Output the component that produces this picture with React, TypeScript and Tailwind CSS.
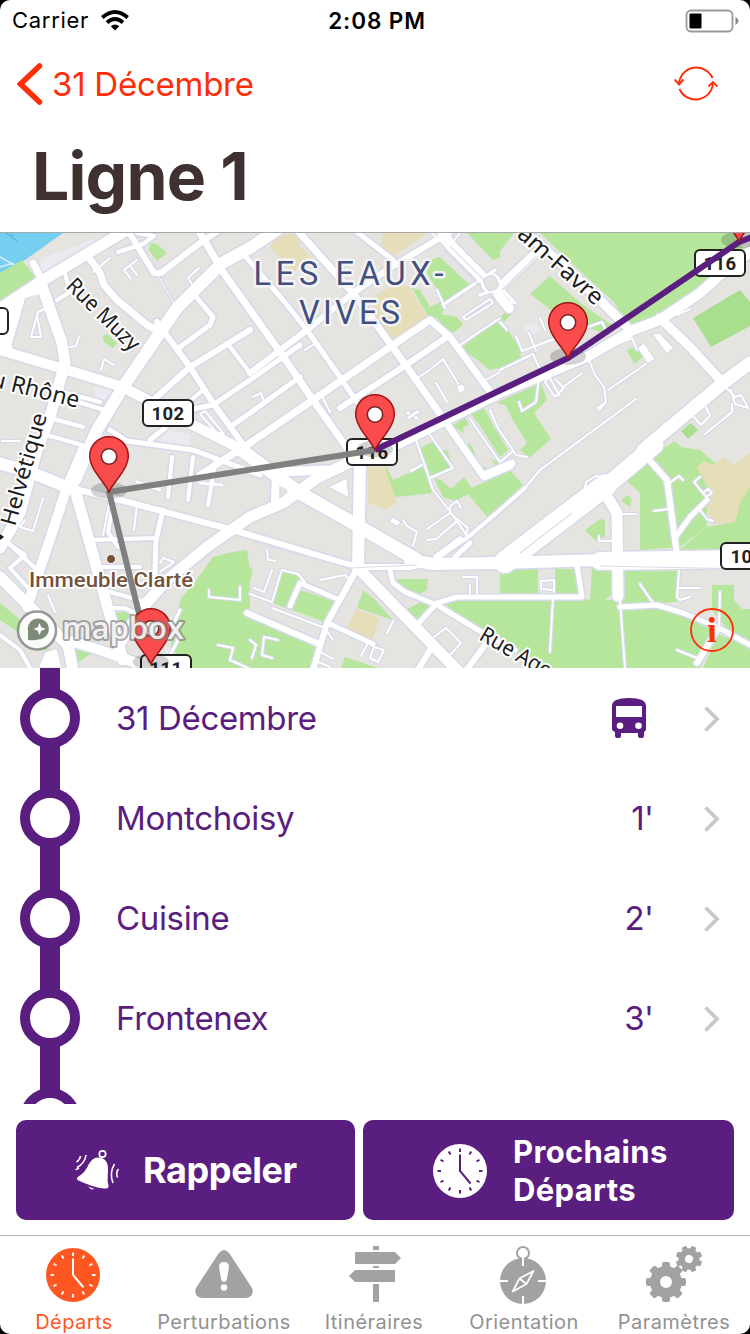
import React from "react";

type Road = [width: number, points: string];

const parks = [
  "0,273 22,260 35,277 0,302",
  "150,243 157,244 167,253 157,261 149,250",
  "103,336 107,334 117,343 113,348 104,342",
  "423,267 430,260 440,257 472,287 447,305",
  "412,288 420,290 430,307 442,301 445,308 441,314 457,317 463,325 450,335 437,318 428,316",
  "467,233 500,233 500,257 493,260",
  "461,348 500,318 521,350 520,363 490,370 480,362",
  "500,233 514,233 500,251",
  "540,233 735,233 744,250 715,273 700,293 675,307 655,318 628,326 614,302 570,262",
  "744,250 750,246 750,252 740,258",
  "530,294 550,276 577,300 590,310 612,325 603,333 560,317",
  "500,318 508,309 512,313 504,322",
  "627,350 637,346 643,357 634,364",
  "386,466 393,480 423,467 433,493 397,497 386,496",
  "420,448 434,441 453,466 431,477",
  "423,450 447,450 453,467 433,477",
  "434,478 441,480 451,489 464,477 472,488 491,479 510,470 523,485 488,518 468,494 455,501 443,497",
  "451,426 465,418 469,425 463,427 464,434 458,429 454,434",
  "470,413 484,408 493,425 508,450 500,457 493,446 481,427",
  "496,403 541,383 547,400 534,413 551,439 529,458 520,450 527,443 514,422 505,405",
  "466,447 470,443 476,455 469,456",
  "481,469 485,466 487,472 496,466 491,459 498,462 496,469 484,474",
  "660,450 675,441 681,447 700,450 727,473 724,484 707,498 707,526 680,547 640,550 640,493 626,480 648,460",
  "585,530 600,519 605,520 605,537 595,540",
  "621,501 627,495 632,499 630,507",
  "740,502 750,485 750,555 677,552 706,527 735,522",
  "213,557 232,552 247,550 250,570 250,668 180,668 170,650 176,620 181,598 192,586",
  "0,603 17,617 35,637 50,650 40,650 15,630 0,620",
  "73,640 97,650 77,663",
  "110,615 125,611 138,616 133,625 122,621",
  "283,572 303,577 300,590 337,602 327,623 273,603",
  "250,568 253,569 250,582",
  "247,615 285,633 317,645 310,670 245,670",
  "345,657 378,668 341,668",
  "363,590 375,600 393,620 357,608",
  "397,579 428,579 427,590 413,598 402,590",
  "403,611 423,601 437,605 418,622",
  "442,602 457,597 617,600 628,668 545,668 500,642 484,633",
  "500,569 538,569 538,595 500,595",
  "555,569 575,569 580,596 555,595",
  "592,568 614,568 614,593 604,600 590,600",
  "624,571 678,571 677,602 657,603 622,603",
  "622,608 656,608 690,618 718,633 700,668 627,668",
  "712,585 734,585 734,600 742,609 750,609 750,640 728,630 712,610",
  "718,634 750,648 750,668 703,668",
];

const lawns = ["693,318 740,290 750,302 750,326 711,347", "681,431 691,423 698,430 688,439"];

const schools = [
  "276,236 300,233 300,247 312,258 302,261 294,272 284,263 270,247",
  "383,233 427,233 393,257 380,247",
  "373,297 395,284 410,287 427,317 390,342 374,312",
  "368,467 385,467 397,502 385,509 368,503",
  "356,609 380,618 372,640 346,630",
  "697,467 704,461 713,465 724,457 733,465 750,453 750,487 740,503 735,522 713,524 703,500 708,488",
];

const pale = [
  "38,266 45,257 110,233 125,233 45,275",
  "95,385 115,388 105,400 95,398",
  "168,430 190,434 190,448 157,445",
  "523,327 536,322 540,331 528,336",
  "165,645 175,652 180,665 166,660",
];

const roads: Road[] = [
  [4, "137,233 154,236 143,244 118,252"],
  [2, "110,258 93,272"],
  [2, "137,260 124,270 131,279 M130,266 137,275"],
  [2, "199,268 188,278 193,286"],
  [1, "158,275 174,304"],
  [2, "47,308 38,312 31,337 41,337 37,315"],
  [2, "79,337 76,346 70,347"],
  [2, "101,370 104,359 114,365"],
  [2, "200,414 205,411 224,434 217,433 200,414"],
  [2, "2,441 20,441"],
  [4, "57,300 70,292 64,270"],
  [4, "47,417 83,427 M47,435 82,445 M66,393 100,402 M72,400 104,410"],
  [2, "305,350 316,343"],
  [2, "253,397 261,393 264,401"],
  [2, "323,398 330,412"],
  [2, "417,378 427,372 443,359 459,385"],
  [2, "436,383 447,402"],
  [3, "408,413 417,418"],
  [3, "443,305 495,270"],
  [2, "463,317 490,299 493,303 466,320 463,317"],
  [2, "457,347 500,318"],
  [2, "482,382 500,372"],
  [2, "500,370 533,354 540,370 536,402 522,411 519,402"],
  [2, "516,336 522,351 552,340 M529,333 536,351 M540,318 545,330"],
  [2, "500,322 507,330 M500,297 514,303"],
  [2, "559,395 549,376 545,382 555,397 564,388 555,379 M562,388 582,373"],
  [2, "540,344 602,322 607,333"],
  [2, "589,360 595,375 604,387 606,402 597,408 M606,402 599,410"],
  [2, "590,355 632,338 637,350"],
  [2, "608,390 646,364"],
  [2, "567,450 636,399"],
  [2, "677,315 690,309"],
  [2, "722,383 735,397 741,395 748,408 735,404 731,390"],
  [2, "705,434 732,412 732,404"],
  [2, "693,416 701,425 710,416 706,407"],
  [2, "415,437 425,466 433,490 449,510 468,537"],
  [2, "428,432 453,468 430,478 M422,465 411,471"],
  [2, "490,410 498,428 516,455 527,457 M470,419 500,462 512,452"],
  [2, "427,529 450,513 450,506 457,501 461,508 M450,513 468,528 466,535 M427,540 436,539 456,522"],
  [2, "403,520 407,526 417,532 413,546"],
  [2, "267,550 268,560 276,561"],
  [2, "320,580 345,575 350,580"],
  [2, "282,570 298,574 305,582"],
  [2, "272,570 264,592 254,588 M281,572 272,602 250,594"],
  [5, "290,606 300,583 335,598"],
  [2, "272,608 325,628 333,640"],
  [2, "387,633 393,621"],
  [2, "430,640 446,628 461,643 448,657"],
  [2, "374,647 384,650 378,662 370,658 374,647 M367,645 361,656"],
  [2, "278,640 264,637 262,655 272,658 M250,640 256,645 252,658"],
  [2, "319,651 333,659 M316,661 330,667"],
  [2, "584,494 586,482 596,476 606,478"],
  [2, "606,492 625,478"],
  [2, "620,514 636,514"],
  [2, "599,536 599,541 613,541"],
  [2, "654,511 668,509"],
  [2, "668,484 679,476 683,480"],
  [2, "700,477 694,482 706,497 712,493 708,489 704,492"],
  [2, "700,510 707,519 713,521"],
  [2, "553,597 550,652"],
  [2, "554,590 541,589 541,581 554,580 554,592"],
  [2, "620,600 625,668"],
  [2, "653,603 640,584"],
  [2, "679,571 677,597 680,600 690,597 M678,588 700,588"],
  [2, "720,592 719,628"],
  [2, "677,650 697,658"],
  [2, "463,577 477,577 477,593 M470,585 470,593"],
  [2, "110,500 103,535 M137,505 134,530"],
  [2, "43,498 33,531 20,527 25,520"],
  [2, "240,587 240,600 209,597 209,590"],
  [2, "218,645 233,648 230,660 248,668"],
  [2, "48,595 55,612"],
  [4, "10,545 25,555 10,568 30,590 M0,535 37,570"],
  [4, "172,457 168,497"],
  [4, "193,457 188,500"],
  [4, "216,458 208,505"],
  [3, "137,482 160,490 M200,483 222,485"],
  [5, "163,510 156,540 155,573"],
  [4, "90,540 156,538"],
  [4, "113,505 108,532 118,547"],
  [2, "160,563 163,558 174,562 160,572"],
  [4, "103,567 140,567 M110,592 150,603"],
  [4, "105,608 125,608 145,618"],
  [3, "180,610 173,625 178,640 170,655"],
  [6, "127,229 154,273 161,273 200,243 222,228"],
  [7, "87,255 100,273 104,285 117,300 147,325 157,330"],
  [7, "197,228 223,272 250,310 280,352 313,400 352,455"],
  [6, "157,322 165,333 190,367 213,403 247,450"],
  [5, "180,347 210,325 213,317 197,298"],
  [6, "150,403 190,367 250,330"],
  [4, "227,343 250,373"],
  [4, "185,405 203,390"],
  [5, "193,409 213,405 250,380 300,345"],
  [5, "230,427 250,413 300,377"],
  [5, "150,440 165,428"],
  [6, "250,373 307,330 353,293 393,266 450,232"],
  [5, "357,232 393,260"],
  [7, "290,222 353,293 373,320 407,367 440,414 484,477 510,466"],
  [5, "240,250 283,300 307,330 342,380 357,402"],
  [7, "200,475 250,443 313,400 342,380 390,347 430,320 450,337 483,382 495,398"],
  [6, "340,408 403,367 447,337"],
  [11, "440,228 450,245 483,278"],
  [10, "498,294 509,308"],
  [2, "432,233 446,246 M460,233 452,243"],
  [2, "437,290 445,308"],
  [7, "484,475 512,463"],
  [9, "500,287 537,252"],
  [3, "480,295 500,287 515,303"],
  [9, "515,225 540,245 597,297 627,327"],
  [9, "660,318 690,347 723,383"],
  [7, "460,540 437,557"],
  [4, "437,557 467,538 500,510 525,488"],
  [2, "525,488 540,470 567,450"],
  [5, "455,557 470,543"],
  [4, "0,635 20,650 30,668"],
  [11, "0,577 30,607 55,632 68,645 73,670"],
  [10, "60,638 100,650 150,668"],
  [11, "42,286 62,343 65,363 50,417 37,450 20,513 0,548"],
  [10, "83,450 67,487 48,545 27,607"],
  [11, "75,490 87,533 107,605 123,660"],
  [10, "0,350 67,370 123,387 147,400 193,425 247,452"],
  [11, "-5,312 40,282 90,252 140,222"],
  [12, "300,214 250,248 222,263 177,308 157,337 123,387 97,430 75,480"],
  [5, "110,430 127,441 193,450 260,475"],
  [7, "33,263 42,280"],
  [12, "-5,462 30,472 67,487"],
  [6, "67,487 120,500 233,530 250,535 357,567 410,567 425,563"],
  [11, "120,643 143,607 167,580 207,547 250,517 283,503 317,478 365,455"],
  [9, "276,472 327,470"],
  [8, "276,473 275,500"],
  [13, "240,449 300,493 360,527 417,560"],
  [12, "360,463 358,568"],
  [6, "358,567 327,623 313,670"],
  [11, "358,568 462,675"],
  [5, "390,570 393,583 405,592 437,605 483,633 515,650"],
  [5, "417,625 437,603 457,597 582,597 577,565"],
  [6, "247,613 317,643"],
  [5, "328,623 373,644"],
  [6, "430,650 415,675 M485,645 465,672"],
  [10, "360,463 500,393 587,357 633,330 660,320 700,293 720,275 750,252"],
  [13, "750,363 723,383 643,450"],
  [17, "655,445 615,479 600,491"],
  [22, "606,485 560,520 505,562"],
  [11, "603,490 617,513 618,596"],
  [6, "645,455 667,480 677,555"],
  [5, "677,535 690,517 707,500"],
  [12, "410,560 433,564 500,563 600,560"],
  [18, "600,561 750,559"],
  [5, "620,607 657,605 683,613 717,627 752,646"],
  [6, "717,630 697,663"],
];

function Lines({ casing }: { casing: boolean }) {
  return (
    <g fill="none" strokeLinecap="round" strokeLinejoin="round" stroke={casing ? "#d5d9e9" : "#ffffff"}>
      {roads.map(([w, p], i) => (
        <path key={i} d={`M${p}`} strokeWidth={casing ? w + (w < 4 ? 2.2 : 3) : w} />
      ))}
    </g>
  );
}

function PinShadow({ x, y }: { x: number; y: number }) {
  return <ellipse cx={x} cy={y} rx="18" ry="8.500" fill="#000" fillOpacity=".17" />;
}

function PinHead({ x, y }: { x: number; y: number }) {
  return (
    <g transform={`translate(${x} ${y})`}>
      <path
        d="M0 0.500C-3-8-19.300-22-19.300-35.500A19.300 19.300 0 0 1 19.300-35.500C19.300-22 3-8 0 0.500Z"
        fill="#fb4c4d"
        stroke="#a01516"
        strokeWidth="1.500"
      />
      <circle cx="0" cy="-35" r="7.700" fill="#fff" stroke="#7c2526" strokeWidth="1.600" />
    </g>
  );
}

function Shield({ x, y, w, label }: { x: number; y: number; w: number; label: string }) {
  return (
    <g>
      <rect x={x} y={y} width={w} height="26" rx="5" fill="#fff" stroke="#222" strokeWidth="2" />
      <text
        x={x + w / 2}
        y={y + 19.5}
        textAnchor="middle"
        fontSize="18.500"
        fontWeight="700"
        letterSpacing=".4"
        fill="#222"
        className="font-['Roboto',sans-serif]"
      >
        {label}
      </text>
    </g>
  );
}

function MapView() {
  return (
    <svg viewBox="0 233 750 435" className="block h-[435px] w-full shrink-0 bg-[#e5e4e0]">
      <polygon points="0,233 63,233 25,260 0,274" fill="#74cff1" />
      <path d="M0,257 14,265 M0,267 14,263" stroke="#d7eefa" strokeWidth="1.500" />
      <path d="M6,233 17,241 M10,233 14,236" stroke="#5fb0e0" strokeWidth="1.200" />
      <g fill="#b5e69c">{parks.map((p, i) => <polygon key={i} points={p} />)}</g>
      <g fill="#a8df8e">{lawns.map((p, i) => <polygon key={i} points={p} />)}</g>
      <g fill="#e6deb8">{schools.map((p, i) => <polygon key={i} points={p} />)}</g>
      <g fill="#eaeaf0">{pale.map((p, i) => <polygon key={i} points={p} />)}</g>
      <Lines casing />
      <circle cx="491" cy="283" r="11" fill="#fff" stroke="#d5d9e9" strokeWidth="1.500" />
      <Lines casing={false} />
      <rect x="485" y="276" width="12" height="14" rx="4" fill="#e5e4e0" stroke="#d5d9e9" strokeWidth="1.500" transform="rotate(-25 491 283)" />
      <polygon points="0,302 40,281 46,292 25,298 12,350 0,348" fill="#fff" />
      <path d="M26,299 12,346" stroke="#d5d9e9" strokeWidth="1.500" />
      <g fill="#fff" stroke="#d5d9e9" strokeWidth="1.200">
        <polygon points="328,487 347,478 349,498" />
        <polygon points="389,521 393,517 401,522 397,527" />
        <polygon points="406,417 418,409 420,413 408,420" />
        <polygon points="456,386 463,384 466,390 459,394" />
        <polygon points="637,348 644,343 655,359 648,364" />
        <polygon points="652,334 660,333 674,348 667,354" />
        <polygon points="45,652 57,648 62,668 38,668" />
      </g>
      <path d="M450,246 484,280 M444,250 480,286 M502,290 537,256 M520,553 572,513 M250,541 350,568 417,565 M600,566 750,569" fill="none" stroke="#d9dcea" strokeWidth="1.200" />
      <g fill="#e5e4e0">
        <polygon points="281,486 288,490 281,496" />
        <polygon points="80,486 86,477 88,485" />
      </g>

      <g className="font-['Noto_Sans',sans-serif]" stroke="#fff" strokeWidth="4" strokeLinejoin="round" paintOrder="stroke" fill="#1c1c1e">
        <text transform="translate(65 287) rotate(44.500)" fontSize="22" textLength="93" lengthAdjust="spacingAndGlyphs">Rue Muzy</text>
        <text transform="translate(-10 386) rotate(14)" fontSize="23" textLength="90" lengthAdjust="spacingAndGlyphs">u Rhône</text>
        <text transform="translate(15 527) rotate(-74)" fontSize="22" textLength="116" lengthAdjust="spacingAndGlyphs">Helvétique</text>
        <text transform="translate(516 236) rotate(41.500)" fontSize="23" textLength="106" lengthAdjust="spacingAndGlyphs">am-Favre</text>
        <text transform="translate(478 639) rotate(30)" fontSize="22" textLength="80" lengthAdjust="spacingAndGlyphs">Rue Ago</text>
      </g>
      <path d="M0 534 4 537 0 540Z" fill="#1c1c1e" />
      <g className="font-['Roboto',sans-serif]" stroke="#f4f4f6" strokeWidth="5" strokeLinejoin="round" paintOrder="stroke" fill="#434f7d">
        <text x="253.500" y="285" fontSize="32.500" textLength="190">LES EAUX-</text>
        <text x="299" y="324" fontSize="32.500" textLength="101">VIVES</text>
      </g>
      <circle cx="111" cy="559" r="4.500" fill="#75523b" stroke="#fff" strokeWidth="1" />
      <text x="29" y="587" fontSize="20" fontWeight="500" textLength="164" lengthAdjust="spacingAndGlyphs" fill="#75523b" stroke="#fff" strokeWidth="3.500" strokeLinejoin="round" paintOrder="stroke" className="font-['Roboto',sans-serif]">
        Immeuble Clarté
      </text>

      <Shield x={143} y={400} w={50} label="102" />
      <Shield x={347} y={439} w={50} label="116" />
      <Shield x={695} y={250} w={50} label="116" />
      <Shield x={141} y={655} w={50} label="111" />
      <Shield x={721} y={543} w={52} label="102" />
      <rect x="-30" y="308" width="38" height="26" rx="5" fill="#fff" stroke="#222" strokeWidth="2" />

      <PinShadow x={739} y={240} />
      <PinShadow x={568} y={356.5} />
      <PinShadow x={375} y={449} />
      <PinShadow x={109} y={490.5} />
      <PinShadow x={151} y={662} />
      <g fill="none" strokeWidth="6" strokeLinejoin="round">
        <path d="M375,450 109,492 151,662" stroke="#808080" />
        <path d="M375,450 568,358 739,242 755,236" stroke="#5a1d80" />
      </g>
      <PinHead x={739} y={241} />
      <PinHead x={568} y={357.5} />
      <PinHead x={375} y={449.5} />
      <PinHead x={109} y={491.5} />
      <PinHead x={151} y={663.5} />

      <g>
        <circle cx="37" cy="630.500" r="19" fill="#fff" fillOpacity=".88" stroke="#777" strokeOpacity=".75" strokeWidth="2.500" />
        <path d="M28 640V631A10.500 10.500 0 1 1 38 639.500Q34 640.500 28 640Z" fill="#7e8b78" />
        <path d="M39.500 623 41.300 627.200 45.500 629 41.300 630.800 39.500 635 37.700 630.800 33.500 629 37.700 627.200Z" fill="#fff" />
        <text x="62" y="639" fontSize="31" fontWeight="600" textLength="122" lengthAdjust="spacingAndGlyphs" fill="#fff" fillOpacity=".85" stroke="#777" strokeOpacity=".65" strokeWidth="3.800" strokeLinejoin="round" paintOrder="stroke" className="font-['Open_Sans',sans-serif]">
          mapbox
        </text>
      </g>
      <g fill="#ff2d08">
        <circle cx="712" cy="630" r="21" fill="none" stroke="#ff2d08" strokeWidth="1.800" />
        <circle cx="711.700" cy="619.800" r="2.900" />
        <path d="M707.800 625H714.500V640.700H716.200V642H707.500V640.700H709.500V626.500H707.800Z" />
      </g>
    </svg>
  );
}

function Clock({ className, hand }: { className: string; hand: string }) {
  return (
    <svg viewBox="0 0 54 54" className={className}>
      <circle cx="27" cy="27" r="27" fill="currentColor" />
      <g stroke={hand} strokeWidth="2">
        {Array.from({ length: 12 }, (_, i) => (
          <line key={i} x1="27" y1="4.500" x2="27" y2="8" transform={`rotate(${i * 30} 27 27)`} />
        ))}
        <path d="M27 10.500V27L37.500 39.500" fill="none" />
      </g>
    </svg>
  );
}

function Bell() {
  return (
    <svg viewBox="0 0 46 44" className="mt-px h-[44px] w-[46px] text-white" fill="none" stroke="currentColor">
      <circle cx="28.500" cy="5" r="3.200" strokeWidth="1.700" />
      <path d="M25.500 8.500C32 9.500 34 14 34 20C34 28 33 32 34.500 36Q35 39 32.500 39.500C24 40 12 35 3.500 31Q2 29 4.500 27.500C11 24 12.500 19 15.500 14C18 10 21 8 25.500 8.500Z" fill="currentColor" stroke="none" />
      <path d="M14 37.500Q17 41.500 20.500 40Z" fill="currentColor" stroke="none" />
      <path d="M6.500 7Q6 11 2.500 13M12 6Q11 14 3 18.500M1.500 20.500Q3.500 20.500 5 19" strokeWidth="1.600" />
      <path d="M40.500 15Q35 24 39 34M44.500 20Q41.500 24 43.500 28.500" strokeWidth="1.600" />
    </svg>
  );
}

function Gear({ cx, cy, r, turn }: { cx: number; cy: number; r: number; turn: number }) {
  return (
    <g transform={`translate(${cx} ${cy}) scale(${r / 20}) rotate(${turn})`}>
      <circle r="11" fill="none" stroke="currentColor" strokeWidth="10" />
      {Array.from({ length: 8 }, (_, i) => (
        <rect key={i} x="-4" y="-20" width="8" height="9" rx="2" fill="currentColor" transform={`rotate(${i * 45})`} />
      ))}
    </g>
  );
}

const stops = [
  { name: "31 Décembre", time: null },
  { name: "Montchoisy", time: "1'" },
  { name: "Cuisine", time: "2'" },
  { name: "Frontenex", time: "3'" },
  { name: "", time: "" },
];

function StopRow({ name, time }: { name: string; time: string | null }) {
  return (
    <div className="flex h-[100px] shrink-0 items-center text-[#5a1d80]">
      <svg viewBox="0 0 100 100" className="size-[100px] shrink-0">
        <path d="M50 0V100" stroke="#5a1d80" strokeWidth="20" />
        <circle cx="50" cy="50" r="25" fill="#fff" stroke="#5a1d80" strokeWidth="10" />
      </svg>
      <span className="ml-4 flex-1 text-[33px] leading-none tracking-[-0.35px]">{name}</span>
      {time === null ? (
        <svg viewBox="0 0 34 40" className="-mt-px mr-[58px] h-[40px] w-[34px]" fill="currentColor">
          <path fillRule="evenodd" d="M0 8Q0 4 4 2Q9 0 17 0T30 2Q34 4 34 8V31Q34 33 32 34V38Q32 40 30 40H28Q26 40 26 38V35H9V38Q9 40 7 40H5Q3 40 3 38V34Q0 33 0 31ZM4 8V19H30V8ZM8 24.500A3.300 3.300 0 1 0 8 31.100A3.300 3.300 0 1 0 8 24.500ZM26.500 24.500A3.300 3.300 0 1 0 26.500 31.100A3.300 3.300 0 1 0 26.500 24.500Z" />
        </svg>
      ) : (
        <span className="mr-[51px] text-[33px] leading-none tracking-[-0.8px]">{time}</span>
      )}
      {name && (
        <svg viewBox="0 0 16 26" className="mr-[30px] mt-[2px] h-[26px] w-4" fill="none" stroke="#c7c7cc" strokeWidth="3.800">
          <path d="M1.500 1.500 13 13 1.500 24.500" />
        </svg>
      )}
    </div>
  );
}

function Tab({ label, active, children }: { label: string; active?: boolean; children: React.ReactNode }) {
  return (
    <div className={`flex w-[150px] shrink-0 flex-col items-center ${active ? "text-[#ff5722]" : "text-[#929292]"}`}>
      <div className="flex h-[69px] items-start justify-center">{children}</div>
      <span className="whitespace-nowrap text-[20px] leading-[24px] tracking-[0.45px]">{label}</span>
    </div>
  );
}

export default function App() {
  return (
    <div className="h-[1334px] w-[750px] overflow-hidden bg-black font-['Inter',sans-serif]">
      <div className="flex h-full flex-col overflow-hidden rounded-[10px] bg-white">
        <div className="grid h-[41px] shrink-0 grid-cols-3 items-center pl-3 pr-[11px] text-[22px] text-black">
          <div className="flex items-center gap-3">
            <span className="tracking-[0.7px]">Carrier</span>
            <svg viewBox="0 0 28 21" className="h-[21px] w-7" fill="none" stroke="#000" strokeWidth="3.800">
              <path d="M1.300 7.500Q14-3.500 26.700 7.500M6 12.500Q14 5.500 22 12.500" />
              <path d="M14 20.500 9.800 16.300Q14 12.800 18.200 16.300Z" fill="#000" stroke="none" />
            </svg>
          </div>
          <span className="ml-[3px] text-center text-[22.500px] font-semibold tracking-[0.9px]">2:08 PM</span>
          <svg viewBox="0 0 54 24" className="h-6 w-[54px] justify-self-end">
            <rect x="1.500" y="1.500" width="46" height="21" rx="4.500" fill="none" stroke="#999" strokeWidth="1.800" />
            <rect x="4.500" y="4.500" width="12" height="15" rx="1" fill="#000" />
            <path d="M50.500 8Q53.500 9.500 53.500 12T50.500 16Z" fill="#888" />
          </svg>
        </div>
        <div className="flex h-[86px] shrink-0 items-center justify-between pl-[17px] pr-8 text-[#ff2d08]">
          <div className="flex items-center gap-[9px]">
            <svg viewBox="0 0 26 42" className="h-[42px] w-[26px]" fill="none" stroke="currentColor" strokeWidth="5.500" strokeLinecap="round">
              <path d="M22.500 3 3.500 21 22.500 39" />
            </svg>
            <span className="text-[33px] leading-none tracking-[-0.25px]">31 Décembre</span>
          </div>
          <svg viewBox="0 0 44 38" className="-mt-[3px] h-[38px] w-11" fill="none" stroke="currentColor" strokeWidth="1.900">
            <path d="M38.500 14A17.500 17.500 0 0 0 5 20M5.500 25A17.500 17.500 0 0 0 39 19" />
            <path d="M0.500 15.500 5 20.500 9.500 15.500M34.500 22.500 39 18 43.500 22.500" />
          </svg>
        </div>
        <div className="flex h-[106px] shrink-0 items-center border-b border-[#a7a7a9] pb-[8px] pl-8">
          <h1 className="text-[66px] font-bold leading-none tracking-[-0.8px] text-[#3e312f]">Ligne 1</h1>
        </div>
        <MapView />
        <div className="flex h-[436px] shrink-0 flex-col overflow-hidden">
          {stops.map((s, i) => (
            <StopRow key={i} name={s.name} time={s.time} />
          ))}
        </div>
        <div className="flex h-[131px] shrink-0 gap-2 px-4 pb-[15px] pt-4 font-bold text-white">
          <div className="flex w-[339px] items-center rounded-[10px] bg-[#5a1d80] pl-[58px]">
            <Bell />
            <span className="ml-[23px] text-[36px] tracking-[-0.4px]">Rappeler</span>
          </div>
          <div className="flex flex-1 items-center rounded-[10px] bg-[#5a1d80] pl-[70px] pt-[2px]">
            <Clock className="size-[54px]" hand="#5a1d80" />
            <span className="ml-[26px] text-[31px] leading-[38px] tracking-[0.35px]">
              Prochains
              <br />
              Départs
            </span>
          </div>
        </div>
        <div className="flex h-[99px] shrink-0 border-t border-[#b2b2b2] pt-3">
          <div className="-ml-px flex w-full">
            <Tab label="Départs" active>
              <Clock className="-ml-[2px] size-[54px]" hand="#fff" />
            </Tab>
            <Tab label="Perturbations">
              <svg viewBox="0 0 58 48" className="mt-[2px] h-12 w-[58px] text-[#a2a2a2]">
                <path d="M23.500 3.500Q29-3.500 34.500 3.500L57 38Q60 46 51 48H7Q-2 46 1 38Z" fill="currentColor" />
                <path d="M24 17Q24 12 29 12T34 17L32 29Q31.300 32 29 32T26 29Z" fill="#fff" />
                <circle cx="29" cy="37.500" r="3.200" fill="#fff" />
              </svg>
            </Tab>
            <Tab label="Itinéraires">
              <svg viewBox="0 0 52 56" className="-mt-[2px] ml-[2px] h-14 w-[52px] text-[#a2a2a2]" fill="currentColor">
                <path d="M24 0H30V4H24ZM7 6H46L52 12 46 18H7Q6 18 6 17V7Q6 6 7 6ZM24 20H30V22H24ZM6 24H46V36H6L0 30ZM24 38H30V56H24Z" />
              </svg>
            </Tab>
            <Tab label="Orientation">
              <svg viewBox="0 0 46 58" className="-ml-[2px] -mt-[2px] h-[58px] w-[46px] text-[#a2a2a2]">
                <circle cx="23" cy="7" r="6" fill="none" stroke="currentColor" strokeWidth="2" />
                <circle cx="23" cy="35" r="23" fill="currentColor" />
                <g fill="none" stroke="#fff" strokeWidth="2">
                  <path d="M23 12V20M23 50V58M0 35H8M38 35H46" />
                  <path d="M33.500 25 26.500 38 12.800 45.500 19.500 32.500ZM19.500 32.500 26.500 38" strokeLinejoin="round" strokeWidth="1.700" />
                </g>
              </svg>
            </Tab>
            <Tab label="Paramètres">
              <svg viewBox="0 0 56 56" className="-mt-[2px] size-14 text-[#a2a2a2]">
                <Gear cx={20} cy={36} r={20} turn={0} />
                <Gear cx={43} cy={13} r={13.3} turn={22.5} />
              </svg>
            </Tab>
          </div>
        </div>
      </div>
    </div>
  );
}
